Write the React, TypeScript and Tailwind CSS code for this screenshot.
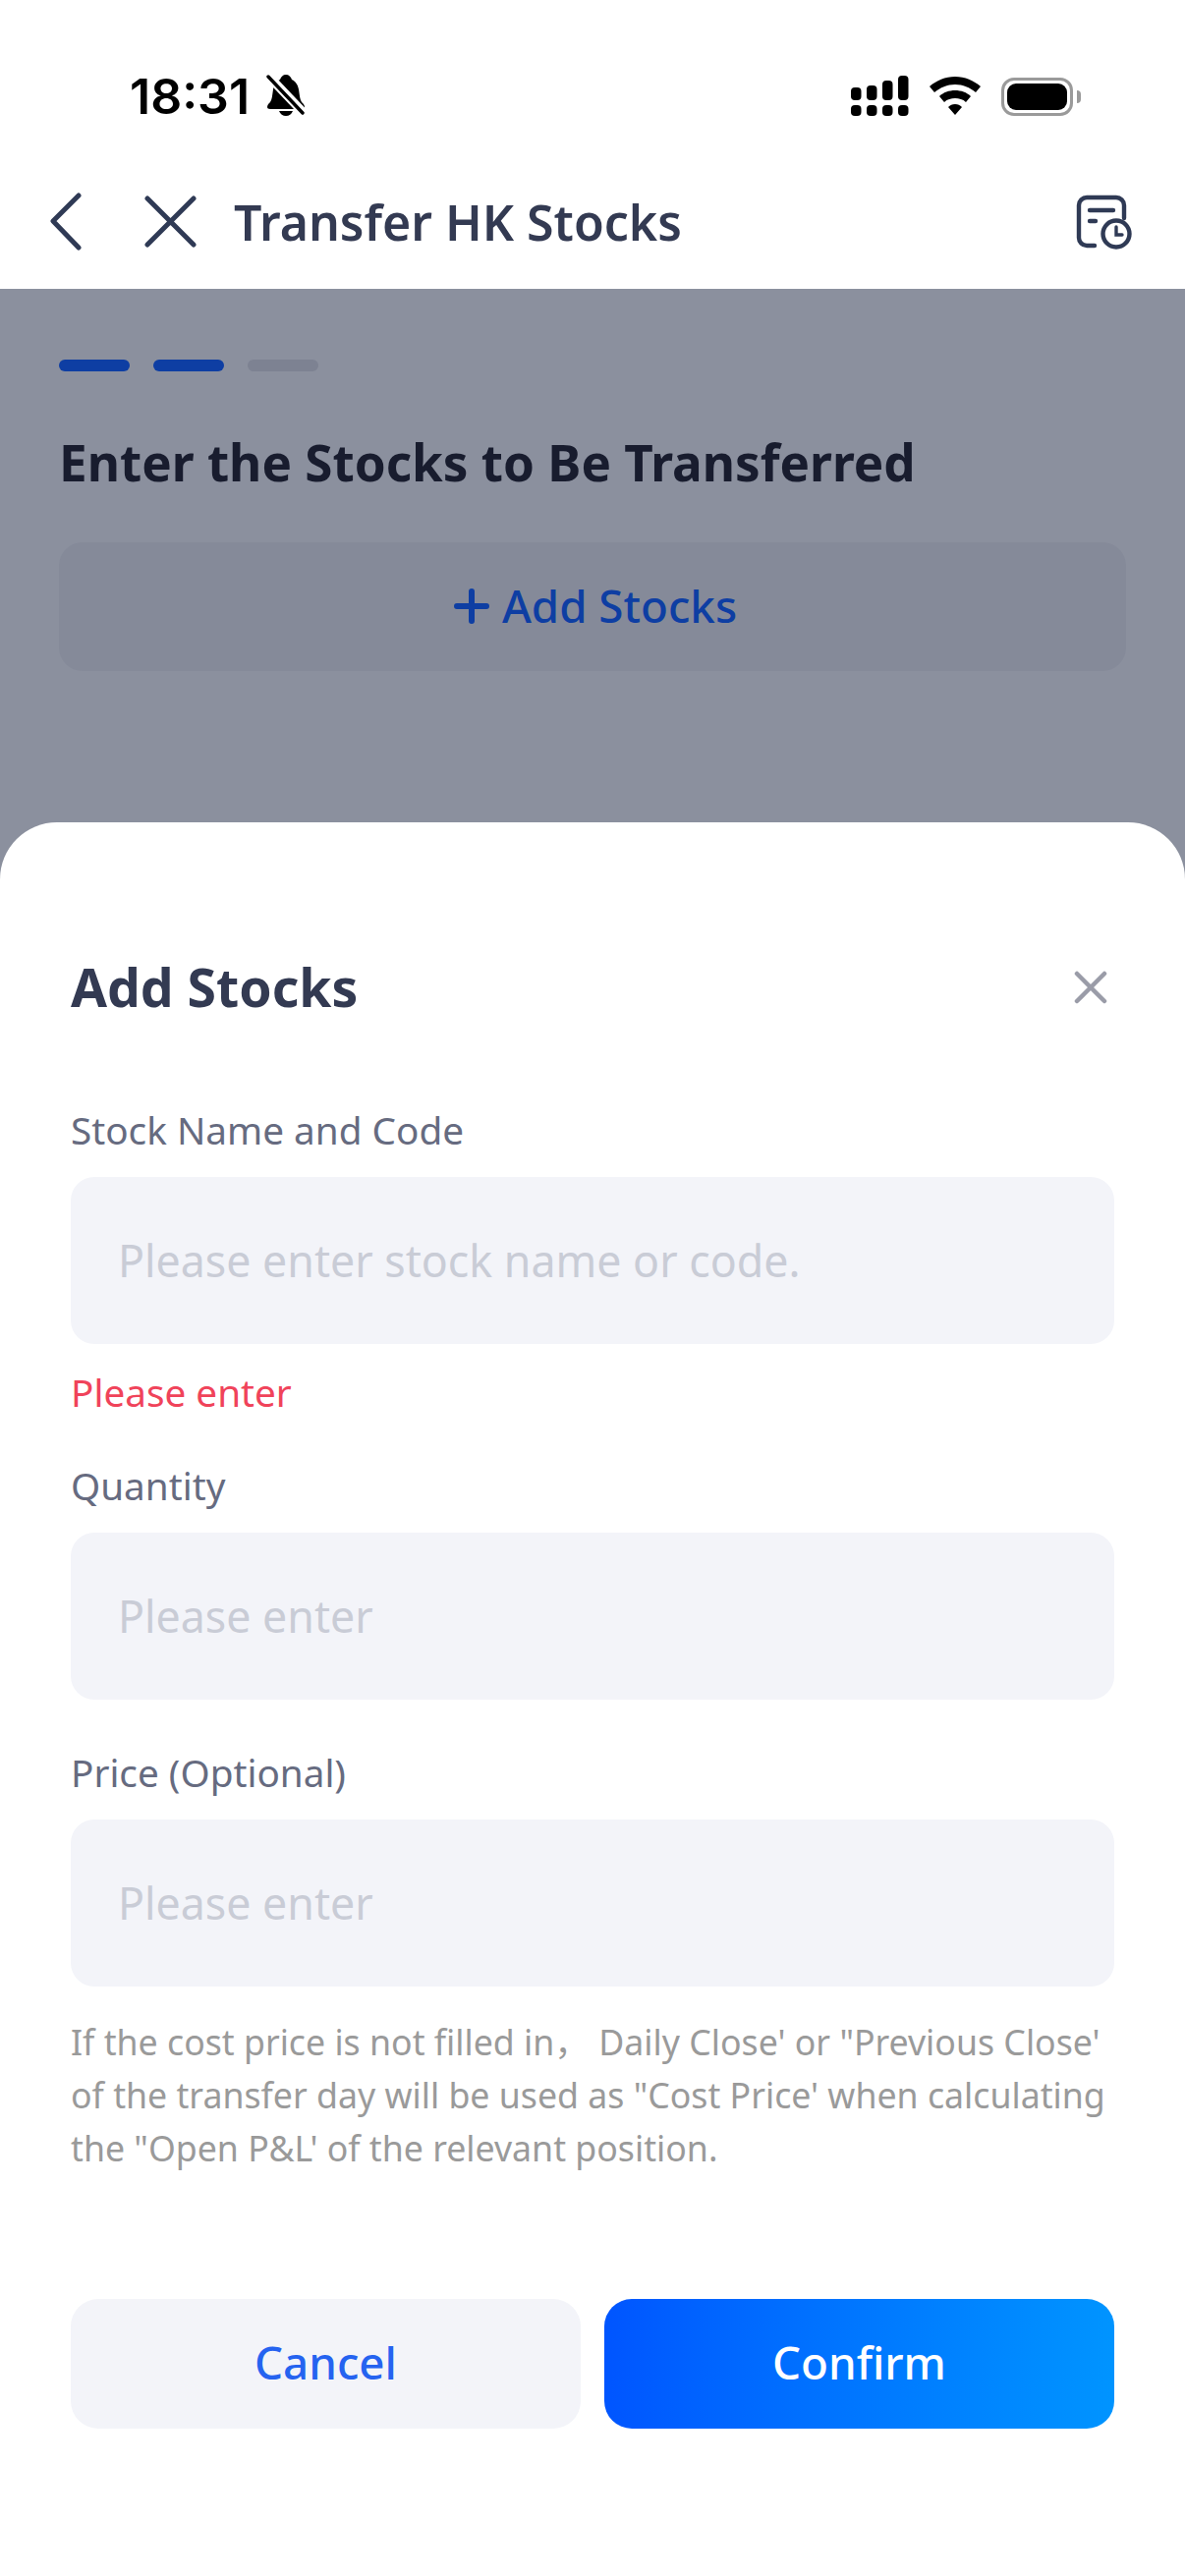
const font = { fontFamily: '"Noto Sans", "Open Sans", "Noto Sans CJK SC", sans-serif' };

function Bell() {
  return (
    <svg width="40" height="44" viewBox="0 0 40 44" className="ml-[17px]">
      <path d="M20 1c3 0 5 2 6 5 4 2 6 5 7 10 1 6 1 10 3 13 2 2 3 3 3 5 0 1-1 2-3 2H4c-2 0-3-1-3-2 0-2 1-3 3-5 2-3 2-7 3-13 1-5 3-8 7-10 1-3 3-5 6-5z" fill="#000" />
      <path d="M13 38h14c-1 3-4 5-7 5s-6-2-7-5z" fill="#000" />
      <path d="M1 1 L39 41" stroke="#fff" strokeWidth="9" />
      <path d="M2 3 L37 40" stroke="#000" strokeWidth="3.4" strokeLinecap="round" />
    </svg>
  );
}

function Signal() {
  return (
    <svg width="60" height="42" viewBox="0 0 60 42">
      <rect x="1" y="12" width="10.5" height="13" rx="4" />
      <rect x="17" y="10" width="10.5" height="15" rx="4" />
      <rect x="33" y="5" width="10.5" height="20" rx="4" />
      <rect x="49" y="0" width="10.5" height="25" rx="4" />
      <rect x="1" y="30" width="10.5" height="11" rx="4" />
      <rect x="17" y="30" width="10.5" height="11" rx="4" />
      <rect x="33" y="30" width="10.5" height="11" rx="4" />
      <rect x="49" y="30" width="10.5" height="11" rx="4" />
    </svg>
  );
}

function Wifi() {
  return (
    <svg width="52" height="40" viewBox="0 0 52 40">
      <path d="M26 0c10 0 19 4 26 10l-5 6c-6-5-13-8-21-8S11 11 5 16l-5-6C7 4 16 0 26 0z" />
      <path d="M26 14c6 0 12 2 16 6l-5 6c-3-3-7-4-11-4s-8 1-11 4l-5-6c4-4 10-6 16-6z" />
      <path d="M26 28c3 0 5 1 7 3l-7 8-7-8c2-2 4-3 7-3z" />
    </svg>
  );
}

function Battery() {
  return (
    <div className="flex items-center">
      <div className="w-[73px] h-[39px] rounded-[13px] border-[3px] border-[#9a9a9a] p-[3px] box-border">
        <div className="w-full h-full rounded-[9px] bg-black" />
      </div>
      <div className="ml-[4px] w-[4px] h-[13px] rounded-r-full bg-[#9a9a9a]" />
    </div>
  );
}

function HistoryIcon() {
  return (
    <svg width="60" height="56" viewBox="0 0 58 56" fill="none" stroke="#2f3a55" strokeWidth="4.4" strokeLinecap="round">
      <path d="M19 52H11a8 8 0 0 1-8-8V11a8 8 0 0 1 8-8h30a8 8 0 0 1 8 8v13" />
      <path d="M14 16h24" />
      <path d="M14 27h6" />
      <circle cx="41" cy="40" r="13.5" />
      <path d="M41 33v8h6" strokeWidth="3.4" />
    </svg>
  );
}

function Field({ label, placeholder, mt }: { label: string; placeholder: string; mt: string }) {
  return (
    <div className={mt}>
      <div className="h-[54px] flex items-center text-[38.7px] text-[#666b80]">{label}</div>
      <div className="mt-[21px] h-[170px] pb-[1px] rounded-[24px] bg-[#f3f4f9] flex items-center pl-[48px] text-[44.7px] text-[#c9ccd6]">
        {placeholder}
      </div>
    </div>
  );
}

export default function App() {
  return (
    <div className="w-[1206px] h-[2622px] flex flex-col bg-[#8b909e] overflow-hidden" style={font}>
      <div className="bg-white h-[294px] shrink-0 flex flex-col">
        <div className="h-[160px] flex items-start pt-[75px] pl-[132px] pr-[106px] justify-between">
          <div className="flex items-start">
            <span className="text-[50px] leading-[46px] font-semibold text-black" style={{ fontFamily: 'Inter, sans-serif' }}>18:31</span>
            <Bell />
          </div>
          <div className="flex items-center gap-[21px] mt-[2px]">
            <Signal />
            <Wifi />
            <Battery />
          </div>
        </div>
        <div className="flex-1 flex items-center pl-[50px] pr-[52px] pb-[2px]">
          <svg width="34" height="60" viewBox="0 0 34 60" fill="none" stroke="#2f3a55" strokeWidth="5" strokeLinecap="round" strokeLinejoin="round">
            <path d="M30 3 L4 29 L30 56" />
          </svg>
          <svg width="54" height="54" viewBox="0 0 54 54" fill="none" stroke="#2f3a55" strokeWidth="5" strokeLinecap="round" className="ml-[63px]">
            <path d="M3 3 L50 50 M50 3 L3 50" />
          </svg>
          <div className="ml-[37px] text-[50px] font-semibold text-[#333a52] leading-none">Transfer HK Stocks</div>
          <div className="ml-auto"><HistoryIcon /></div>
        </div>
      </div>

      <div className="h-[543px] shrink-0 px-[60px] pt-[72px]">
        <div className="flex gap-[24px]">
          <div className="w-[72px] h-[12px] rounded-full bg-[#0e3ea3]" />
          <div className="w-[72px] h-[12px] rounded-full bg-[#0e3ea3]" />
          <div className="w-[72px] h-[12px] rounded-full bg-[#7d8292]" />
        </div>
        <div className="mt-[57px] text-[51.2px] leading-[70px] font-bold text-[#181c2e]">Enter the Stocks to Be Transferred</div>
        <div className="mt-[47px] h-[131px] pl-[6px] pb-[2px] rounded-[24px] bg-[#858a99] flex items-center justify-center text-[#0e3ea3] text-[45.7px] font-medium">
          <svg width="36" height="36" viewBox="0 0 36 36" fill="none" stroke="#0e3ea3" strokeWidth="6" strokeLinecap="round" className="mr-[13px]">
            <path d="M18 3v30M3 18h30" />
          </svg>
          Add Stocks
        </div>
      </div>

      <div className="flex-1 bg-white rounded-t-[58px] px-[72px] flex flex-col">
        <div className="mt-[135px] flex items-center justify-between h-[66px]">
          <div className="text-[53.5px] font-bold text-[#333a52]">Add Stocks</div>
          <svg width="34" height="34" viewBox="0 0 34 34" fill="none" stroke="#9a9ca8" strokeWidth="4.5" strokeLinecap="round" className="mr-[7px]">
            <path d="M3 3 L31 31 M31 3 L3 31" />
          </svg>
        </div>
        <Field mt="mt-[85px]" label="Stock Name and Code" placeholder="Please enter stock name or code." />
        <div className="mt-[22px] h-[54px] flex items-center text-[38.7px] text-[#f0435a]">Please enter</div>
        <Field mt="mt-[41px]" label="Quantity" placeholder="Please enter" />
        <Field mt="mt-[47px]" label="Price (Optional)" placeholder="Please enter" />
        <div className="mt-[29px] text-[35.7px] leading-[54px] text-[#9a9a9a] whitespace-pre">
          {"If the cost price is not filled in， Daily Close' or \"Previous Close'\nof the transfer day will be used as \"Cost Price' when calculating\nthe \"Open P&L' of the relevant position."}
        </div>
        <div className="mt-[127px] flex gap-[24px]">
          <div className="flex-1 h-[132px] pb-[4px] rounded-[28px] bg-[#f3f4f9] flex items-center justify-center text-[45.7px] font-medium text-[#2563f0]">Cancel</div>
          <div className="flex-1 h-[132px] pb-[4px] rounded-[28px] bg-gradient-to-r from-[#0055ff] to-[#0094ff] flex items-center justify-center text-[45.7px] font-medium text-white">Confirm</div>
        </div>
      </div>
    </div>
  );
}
